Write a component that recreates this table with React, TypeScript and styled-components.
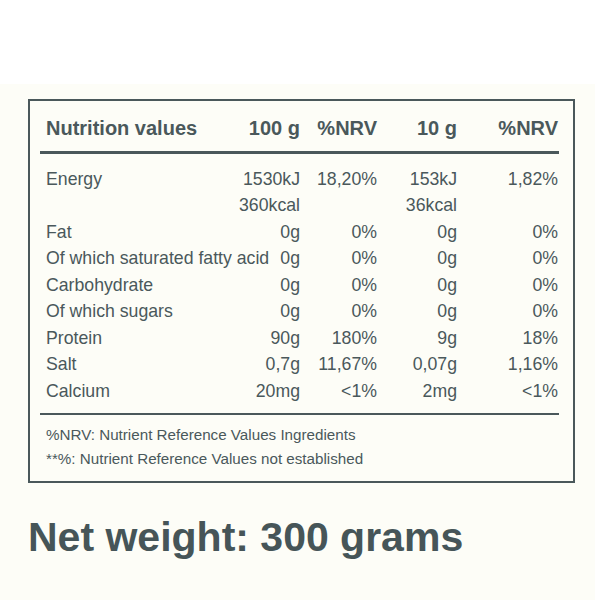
import React from "react";
import styled, { createGlobalStyle } from "styled-components";

const Global = createGlobalStyle`
  html, body { margin: 0; padding: 0; background: #ffffff; }
  body { font-family: "Liberation Sans", Arial, sans-serif; }
`;

const ink = "#4a585b";

const Panel = styled.div`
  margin-top: 84px;
  width: 595px;
  height: 516px;
  background: #fdfdf7;
  padding: 15px 0 0 28px;
  box-sizing: border-box;
`;

const Box = styled.div`
  width: 547px;
  box-sizing: border-box;
  border: 2px solid ${ink};
  padding: 15px 14px 10px 10px;
  color: ${ink};
`;

const Grid = styled.div<{ $head?: boolean }>`
  display: grid;
  grid-template-columns: 198px 62px 77px 80px 101px 1px;
  font-size: ${(p) => (p.$head ? "20px" : "17.7px")};
  font-weight: ${(p) => (p.$head ? 700 : 400)};
  line-height: ${(p) => (p.$head ? "24px" : "26.5px")};
`;

const Label = styled.div`
  padding-left: 6px;
  white-space: nowrap;
`;

const Val = styled.div`
  text-align: right;
  white-space: nowrap;
`;

const Rule = styled.div<{ $thick?: boolean }>`
  height: ${(p) => (p.$thick ? "3px" : "2px")};
  background: ${ink};
  margin: ${(p) => (p.$thick ? "11px 0 11.75px" : "8.75px 0 8px")};
`;

const Note = styled.div`
  padding-left: 6px;
  font-size: 15.2px;
  line-height: 24px;
`;

const Weight = styled.div`
  margin-top: 34px;
  font-size: 41px;
  line-height: 1;
  font-weight: 700;
  color: #465558;
`;

const rows: [string, string, string, string, string][] = [
  ["Energy", "1530kJ\n360kcal", "18,20%", "153kJ\n36kcal", "1,82%"],
  ["Fat", "0g", "0%", "0g", "0%"],
  ["Of which saturated fatty acid", "0g", "0%", "0g", "0%"],
  ["Carbohydrate", "0g", "0%", "0g", "0%"],
  ["Of which sugars", "0g", "0%", "0g", "0%"],
  ["Protein", "90g", "180%", "9g", "18%"],
  ["Salt", "0,7g", "11,67%", "0,07g", "1,16%"],
  ["Calcium", "20mg", "<1%", "2mg", "<1%"],
];

const Multi = ({ text }: { text: string }) => (
  <>
    {text.split("\n").map((t, i) => (
      <div key={i}>{t}</div>
    ))}
  </>
);

export default function App() {
  return (
    <>
      <Global />
      <Panel>
        <Box>
          <Grid $head>
            <Label>Nutrition values</Label>
            <Val>100 g</Val>
            <Val>%NRV</Val>
            <Val>10 g</Val>
            <Val>%NRV</Val>
          </Grid>
          <Rule $thick />
          {rows.map((r) => (
            <Grid key={r[0]}>
              <Label>{r[0]}</Label>
              <Val>
                <Multi text={r[1]} />
              </Val>
              <Val>{r[2]}</Val>
              <Val>
                <Multi text={r[3]} />
              </Val>
              <Val>{r[4]}</Val>
            </Grid>
          ))}
          <Rule />
          <Note>%NRV: Nutrient Reference Values Ingredients</Note>
          <Note>**%: Nutrient Reference Values not established</Note>
        </Box>
        <Weight>Net weight: 300 grams</Weight>
      </Panel>
    </>
  );
}
